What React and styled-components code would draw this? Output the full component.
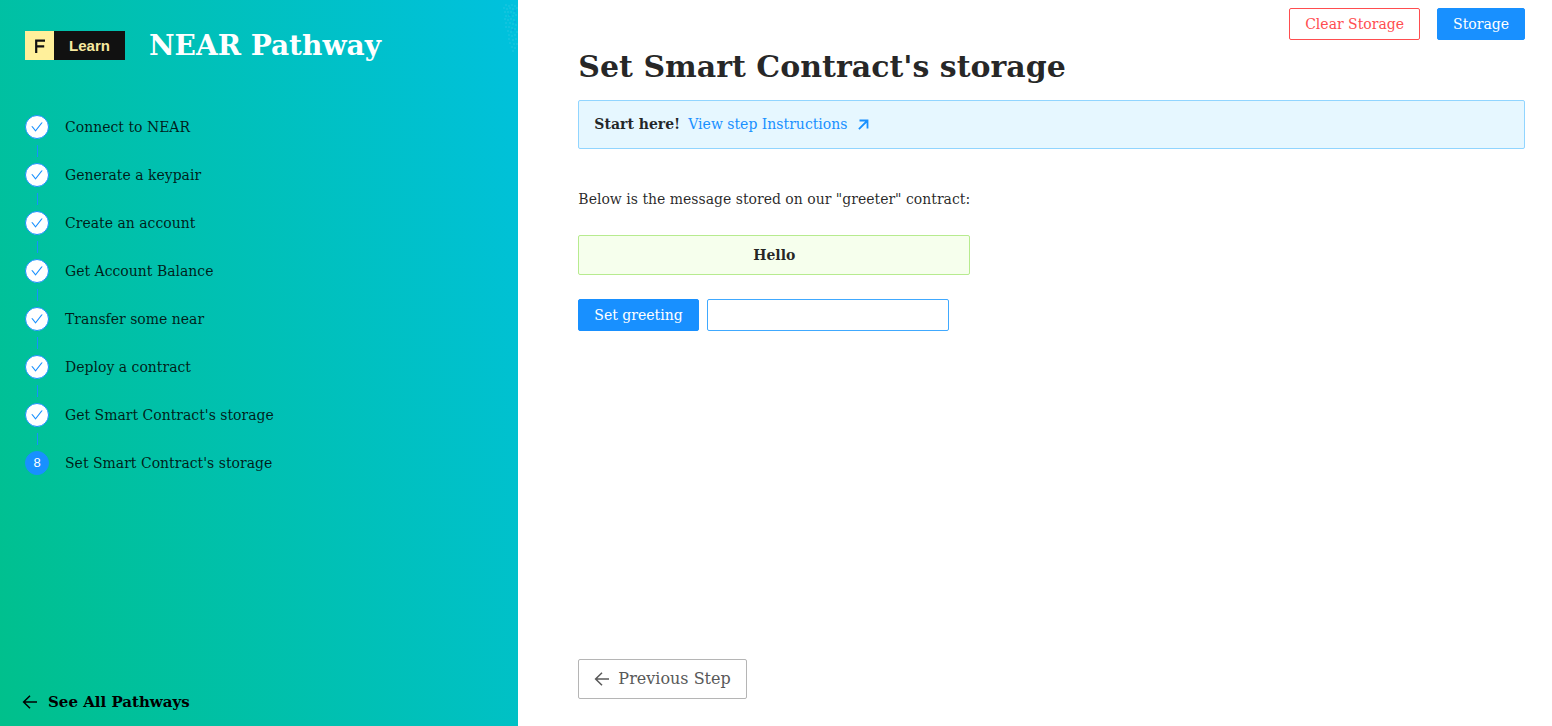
import React, { useState } from "react";
import styled, { createGlobalStyle } from "styled-components";
import { AiOutlineCheck } from "react-icons/ai";

const GlobalStyle = createGlobalStyle`
  *, *::before, *::after { box-sizing: border-box; }
  body {
    margin: 0;
    background: #fff;
    color: rgba(0, 0, 0, 0.85);
    font: 14px/22px "DejaVu Serif", serif;
  }
  a { text-decoration: none; }
`;

const Layout = styled.div`
  display: grid;
  grid-template-columns: 33.4% 1fr;
  min-height: 100vh;
`;

const Sidebar = styled.aside`
  position: relative;
  display: flex;
  flex-direction: column;
  padding: 24px 24px 12px;
  background: linear-gradient(73deg, #00c08b, #00c1de);
`;

const Speckles = styled.svg`
  position: absolute;
  top: 0;
  right: 0;
`;

const Brand = styled.header`
  display: flex;
  align-items: center;
  gap: 24px;
  height: 43px;
  margin-bottom: 48px;
`;

const Logo = styled.div`
  display: flex;
  height: 29px;
  margin-left: 1px;
  font: bold 15px/29px "Liberation Sans", sans-serif;
`;

const LogoMark = styled.span`
  display: flex;
  justify-content: center;
  align-items: center;
  width: 29px;
  background: #fff09b;
`;

const LogoWord = styled.span`
  width: 71px;
  background: #111;
  color: #f7e9a0;
  text-align: center;
`;

const BrandTitle = styled.div`
  color: #fff;
  font-size: 28px;
  line-height: 40px;
  font-weight: bold;
`;

const StepList = styled.ol`
  display: flex;
  flex-direction: column;
  gap: 24px;
  margin: 0;
  padding: 0 0 0 1px;
  list-style: none;
`;

const Step = styled.li`
  position: relative;
  display: flex;
  align-items: center;
  gap: 16px;
  height: 24px;

  &:not(:last-child)::after {
    content: "";
    position: absolute;
    top: 30px;
    left: 12px;
    width: 1px;
    height: 12px;
    background: #1890ff;
  }
`;

const StepBadge = styled.span`
  display: flex;
  justify-content: center;
  align-items: center;
  width: 24px;
  height: 24px;
  border: 1px solid #1890ff;
  border-radius: 50%;
  background: ${(p) => (p.$current ? "#1890ff" : "#fff")};
  color: ${(p) => (p.$current ? "#fff" : "#1890ff")};
  font: 13px/22px "Liberation Sans", sans-serif;
`;

const BackLink = styled.a`
  display: flex;
  align-items: center;
  gap: 10px;
  margin-top: auto;
  margin-left: -2px;
  height: 24px;
  color: #000;
  font-size: 15px;
  font-weight: bold;
`;

const Main = styled.main`
  display: flex;
  flex-direction: column;
  padding: 8px 27px 27px 60px;
`;

const Toolbar = styled.div`
  display: flex;
  justify-content: flex-end;
  gap: 17px;
`;

const tones = {
  primary: { bg: "#1890ff", line: "#1890ff", ink: "#fff" },
  danger: { bg: "#fff", line: "#ff4d4f", ink: "#ff4d4f" },
  plain: { bg: "#fff", line: "#b5b5b5", ink: "#595959" },
};

const Button = styled.button`
  display: inline-flex;
  align-items: center;
  gap: 8px;
  height: ${(p) => (p.$large ? 40 : 32)}px;
  padding: 0 15px 1px;
  border: 1px solid ${(p) => tones[p.$tone].line};
  border-radius: 2px;
  background: ${(p) => tones[p.$tone].bg};
  color: ${(p) => tones[p.$tone].ink};
  font-family: inherit;
  font-size: ${(p) => (p.$large ? 16 : 14)}px;
  cursor: pointer;
`;

const Title = styled.h1`
  margin: 7px 0 14px;
  font-size: 30px;
  line-height: 39px;
`;

const Notice = styled.div`
  display: flex;
  align-items: flex-start;
  gap: 8px;
  height: 49px;
  padding: 12px 15px;
  border: 1px solid #91d5ff;
  border-radius: 2px;
  background: #e6f7ff;
`;

const NoticeLink = styled.a`
  display: inline-flex;
  align-items: center;
  gap: 11px;
  color: #1890ff;
`;

const Content = styled.section`
  display: flex;
  flex-direction: column;
  align-items: flex-start;
  gap: 24px;
  padding: 39px 0 24px;
`;

const Greeting = styled.div`
  display: grid;
  gap: 24px;
`;

const Text = styled.p`
  margin: 0;
  line-height: 23px;
`;

const Message = styled.strong`
  padding: 8px;
  border: 1px solid #b7eb8f;
  border-radius: 2px;
  background: #f6ffed;
  text-align: center;
`;

const Form = styled.form`
  display: flex;
  gap: 8px;
`;

const Input = styled.input`
  width: 242px;
  height: 32px;
  padding: 4px 11px;
  border: 1px solid #40a9ff;
  border-radius: 2px;
  font: inherit;
  outline: none;
`;

const Footer = styled.footer`
  margin-top: auto;
`;

const steps = [
  "Connect to NEAR",
  "Generate a keypair",
  "Create an account",
  "Get Account Balance",
  "Transfer some near",
  "Deploy a contract",
  "Get Smart Contract's storage",
  "Set Smart Contract's storage",
];

const specks = [
  [4, 5], [7, 6], [10, 5], [13, 6], [2, 8], [5, 9], [8, 8], [11, 9], [15, 8],
  [3, 12], [6, 12], [9, 12], [12, 13], [4, 16], [7, 16], [11, 16], [14, 15],
  [3, 19], [6, 20], [9, 19], [12, 20], [4, 23], [8, 23], [11, 24], [14, 25],
  [4, 27], [7, 27], [10, 28], [13, 29], [6, 31], [9, 32], [15, 32], [7, 35],
  [10, 36], [13, 35], [7, 39], [11, 40], [14, 39], [8, 43], [12, 44], [15, 44],
  [10, 47], [13, 48], [11, 51],
];
const darkSpecks = [[8, 15], [13, 11], [13, 22], [11, 30]];

const ArrowLeft = () => (
  <svg width="16" height="16" viewBox="0 0 16 16" aria-hidden="true">
    <path d="M8 1.7 1.6 8 8 14.3M1.8 8H15" fill="none" stroke="currentColor" strokeWidth="1.5" />
  </svg>
);

export default function App() {
  const [greeting, setGreeting] = useState("");
  const current = steps.length - 1;

  return (
    <>
      <GlobalStyle />
      <Layout>
        <Sidebar>
          <Speckles width="16" height="54" aria-hidden="true">
            {specks.map(([x, y]) => (
              <circle key={`${x}-${y}`} cx={x} cy={y} r="0.8" fill="#25c9e2" />
            ))}
            {darkSpecks.map(([x, y]) => (
              <circle key={`${x}-${y}`} cx={x} cy={y} r="0.8" fill="#0aa2dc" />
            ))}
          </Speckles>
          <Brand>
            <Logo>
              <LogoMark>
                <svg width="11" height="14" viewBox="0 0 11 14" role="img" aria-label="Figment">
                  <path d="M2.2 14V1.7H11M2 7.4h8.2" fill="none" stroke="#111" strokeWidth="2.2" />
                </svg>
              </LogoMark>
              <LogoWord>Learn</LogoWord>
            </Logo>
            <BrandTitle>NEAR Pathway</BrandTitle>
          </Brand>
          <StepList>
            {steps.map((label, i) => (
              <Step key={label}>
                <StepBadge $current={i === current}>
                  {i === current ? i + 1 : <AiOutlineCheck size={14} />}
                </StepBadge>
                {label}
              </Step>
            ))}
          </StepList>
          <BackLink href="#pathways">
            <ArrowLeft />
            See All Pathways
          </BackLink>
        </Sidebar>
        <Main>
          <Toolbar>
            <Button type="button" $tone="danger">Clear Storage</Button>
            <Button type="button" $tone="primary">Storage</Button>
          </Toolbar>
          <Title>Set Smart Contract's storage</Title>
          <Notice>
            <strong>Start here!</strong>
            <NoticeLink href="#instructions">
              View step Instructions
              <svg width="11" height="11" viewBox="0 0 11 11" aria-hidden="true">
                <path d="M1.5 1.5h8v8M9.5 1.5l-8.6 8.6" fill="none" stroke="currentColor" strokeWidth="1.8" />
              </svg>
            </NoticeLink>
          </Notice>
          <Content>
            <Greeting>
              <Text>Below is the message stored on our "greeter" contract:</Text>
              <Message>Hello</Message>
            </Greeting>
            <Form onSubmit={(e) => e.preventDefault()}>
              <Button type="submit" $tone="primary">Set greeting</Button>
              <Input
                aria-label="Greeting"
                value={greeting}
                onChange={(e) => setGreeting(e.target.value)}
              />
            </Form>
          </Content>
          <Footer>
            <Button type="button" $tone="plain" $large>
              <ArrowLeft />
              Previous Step
            </Button>
          </Footer>
        </Main>
      </Layout>
    </>
  );
}
